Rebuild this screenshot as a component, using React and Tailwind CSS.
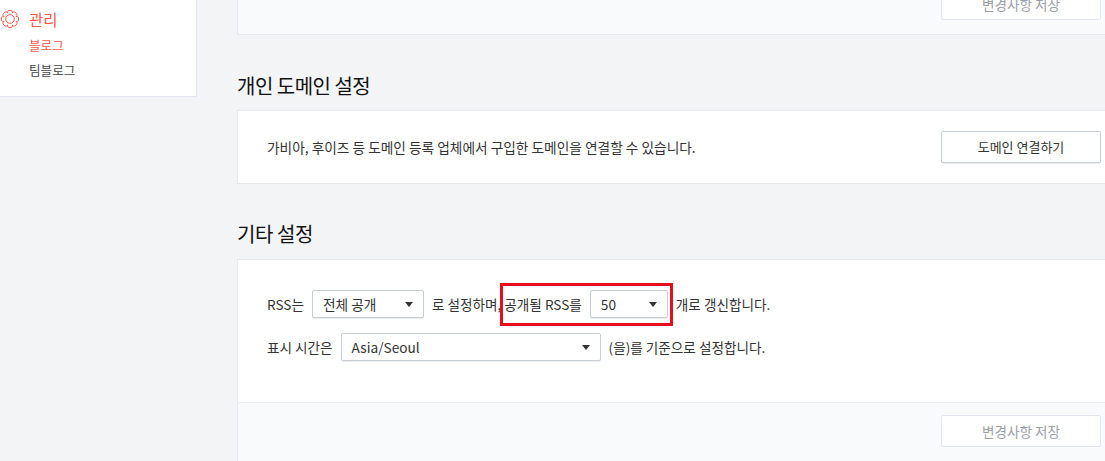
const font = { fontFamily: '"Noto Sans CJK KR", "Noto Sans", sans-serif' };

const gearPath = (() => {
  const lobes = 8;
  const cx = 10, cy = 10, outer = 9.5, inner = 7.3;
  const step = (Math.PI * 2) / lobes;
  const p = (r, t) => `${(cx + r * Math.cos(t)).toFixed(2)} ${(cy + r * Math.sin(t)).toFixed(2)}`;
  let d = "";
  for (let i = 0; i < lobes; i++) {
    const a = i * step - Math.PI / 2;
    if (i === 0) d += `M${p(inner, a - step / 2)}`;
    d += `C${p(outer, a - step * 0.42)} ${p(outer + 0.2, a - step * 0.25)} ${p(outer, a)}`;
    d += `C${p(outer + 0.2, a + step * 0.25)} ${p(outer, a + step * 0.42)} ${p(inner, a + step / 2)}`;
  }
  return d + "Z";
})();

function Caret() {
  return <span className="ml-auto w-0 h-0 border-x-[4px] border-x-transparent border-t-[5px] border-t-[#333]" />;
}

function Select({ w, children }) {
  return (
    <span className={`${w} h-[28px] flex items-center pl-[10px] pr-[10px] bg-white border border-[#c5cdd7] rounded-[2px] shadow-[0_1px_1px_rgba(0,0,0,0.08)] text-[13.7px] text-[#333]`}>
      {children}
      <Caret />
    </span>
  );
}

function SaveButton() {
  return (
    <button className="w-[160px] h-[32px] shrink-0 bg-white border border-[#e3e6ee] rounded-[2px] text-[13.6px] text-[#9a9ea6]">
      변경사항 저장
    </button>
  );
}

export default function App() {
  return (
    <div className="relative w-[1105px] h-[461px] overflow-hidden bg-[#f3f4f6] flex items-start" style={font}>
      <aside className="w-[197px] h-[97px] shrink-0 bg-white border-r border-b border-[#e1e5ee] pt-[8px] flex flex-col">
        <div className="flex items-center pl-[1px] h-[22px] text-[#f8584a]">
          <svg width="18" height="18" viewBox="0 0 20 20" fill="none" stroke="currentColor" strokeWidth="1.1" strokeLinejoin="round">
            <circle cx="10" cy="10" r="4.8" />
            <path d={gearPath} />
          </svg>
          <span className="ml-[10px] text-[15.5px] leading-[22px]">관리</span>
        </div>
        <div className="mt-[3px] ml-[29px] text-[12.6px] leading-[24.500px]">
          <div className="text-[#f8584a]">블로그</div>
          <div className="text-[#444]">팀블로그</div>
        </div>
      </aside>

      <main className="ml-[40px] w-[900px] shrink-0">
        <section className="h-[35px] bg-[#f9fafc] border border-t-0 border-[#e6e8ee] flex items-end pb-[14px] pl-[703px] overflow-hidden">
          <SaveButton />
        </section>

        <h2 className="mt-[38px] h-[37px] text-[20px] tracking-[-0.5px] leading-[25px] text-[#111]">개인 도메인 설정</h2>
        <section className="h-[74px] bg-white border border-[#e6e8ee] flex items-center pl-[29px] text-[13.700px] text-[#333]">
          <span className="w-[674px] shrink-0">가비아, 후이즈 등 도메인 등록 업체에서 구입한 도메인을 연결할 수 있습니다.</span>
          <button className="w-[160px] h-[32px] shrink-0 bg-white border border-[#c5cdd7] rounded-[2px] shadow-[0_1px_1px_rgba(0,0,0,0.08)] text-[13px] text-[#333]">
            도메인 연결하기
          </button>
        </section>

        <h2 className="mt-[37px] h-[38px] text-[20px] tracking-[-0.4px] leading-[25px] text-[#111]">기타 설정</h2>
        <section className="bg-white border border-[#e6e8ee] text-[13.6px] text-[#333]">
          <div className="h-[142px] pl-[29px] pt-[30px] flex flex-col gap-[15px]">
            <div className="flex items-center h-[28px]">
              <span>RSS는</span>
              <span className="ml-[8px]"><Select w="w-[112px]">전체 공개</Select></span>
              <span className="ml-[8px]">로 설정하며, 공개될 RSS를</span>
              <span className="ml-[8px]"><Select w="w-[78px]">50</Select></span>
              <span className="ml-[8px]">개로 갱신합니다.</span>
            </div>
            <div className="flex items-center h-[28px]">
              <span>표시 시간은</span>
              <span className="ml-[8px]"><Select w="w-[260px]">Asia/Seoul</Select></span>
              <span className="ml-[8px]">(을)를 기준으로 설정합니다.</span>
            </div>
          </div>
          <div className="h-[80px] bg-[#f9fafc] border-t border-[#eceef3] pt-[12px] pl-[703px]">
            <SaveButton />
          </div>
        </section>
      </main>

      <div className="absolute left-[500px] top-[283px] w-[173px] h-[43px] border-[3px] border-[#e60d1e]" />
    </div>
  );
}
